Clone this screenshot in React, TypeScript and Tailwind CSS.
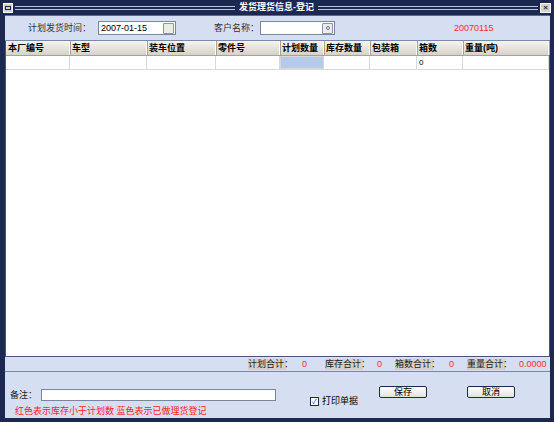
import React from 'react';

const columns = [
  { title: '本厂编号', w: 'w-[64px]' },
  { title: '车型', w: 'w-[77px]' },
  { title: '装车位置', w: 'w-[69px]' },
  { title: '零件号', w: 'w-[64px]' },
  { title: '计划数量', w: 'w-[44px]' },
  { title: '库存数量', w: 'w-[46px]' },
  { title: '包装箱', w: 'w-[47px]' },
  { title: '箱数', w: 'w-[46px]' },
  { title: '重量(吨)', w: 'flex-1' },
];

// label box, space, value box — widths match the reference positions
const totals = [
  { label: '计划合计：', value: '0', pad: 'w-[16px]', vw: 'w-[23px]' },
  { label: '库存合计：', value: '0', pad: 'w-[14px]', vw: 'w-[18px]' },
  { label: '箱数合计：', value: '0', pad: 'w-[16px]', vw: 'w-[18px]' },
  { label: '重量合计：', value: '0.0000', pad: 'w-[14px]', vw: 'w-[30px]' },
];

const SmallBtn = ({ dot }: { dot?: boolean }) => (
  <div className="w-[11px] h-[11px] bg-[#ecebe6] border border-[#8a94a8] rounded-[1px] flex items-center justify-center">
    {dot && <div className="w-[4px] h-[4px] border border-[#6b7896] rounded-full" />}
  </div>
);

const Button = ({ label }: { label: string }) => (
  <div className="w-[48px] h-[12px] bg-gradient-to-b from-[#ffffff] to-[#e2e2dc] border border-[#1c2a50] rounded-[2px] flex items-center justify-center text-[9px] leading-none text-black">
    {label}
  </div>
);

export default function App() {
  return (
    <div
      className="w-[554px] h-[422px] bg-[#1d2850] flex flex-col overflow-hidden text-black"
      style={{ fontFamily: '"Liberation Sans", "Noto Sans CJK SC", sans-serif' }}
    >
      {/* title bar */}
      <div className="h-[15px] flex items-center px-[3px] gap-[2px] shrink-0">
        <div className="w-[10px] h-[10px] bg-[#d4d0c8] border border-[#ffffff] flex items-center justify-center">
          <div className="w-[6px] h-[4px] border border-[#1d2850]" />
        </div>
        <div className="flex-1 flex flex-col gap-[2px]">
          <div className="h-px bg-[#b8c4e0]" />
          <div className="h-px bg-[#b8c4e0]" />
        </div>
        <div className="px-[2px] text-[9px] font-bold text-white leading-none">发货理货信息-登记</div>
        <div className="flex-1 flex flex-col gap-[2px]">
          <div className="h-px bg-[#b8c4e0]" />
          <div className="h-px bg-[#b8c4e0]" />
        </div>
        <div className="w-[11px] h-[10px] bg-[#d4d0c8] border border-[#ffffff] flex items-center justify-center text-[8px] leading-none font-bold text-[#1d2850]">
          ×
        </div>
      </div>

      <div className="flex-1 mx-[5px] mr-[4px] bg-[#d6def1] flex flex-col border-t border-[#5a6a94]">
        {/* form */}
        <div className="h-[25px] flex items-center text-[9px] leading-none shrink-0 border-b border-[#7888aa]">
          <span className="ml-[23px] text-[#333]">计划发货时间：</span>
          <div className="ml-[7px] w-[78px] h-[14px] bg-white border border-[#7a869e] flex items-center justify-between pl-[2px] pr-[1px]">
            <span>2007-01-15</span>
            <SmallBtn />
          </div>
          <span className="ml-[38px] text-[#333]">客户名称：</span>
          <div className="ml-[1px] w-[75px] h-[14px] bg-white border border-[#7a869e] flex items-center justify-end pr-[1px]">
            <SmallBtn dot />
          </div>
          <span className="ml-[119px] text-[#ff2a2a]">20070115</span>
        </div>

        {/* table */}
        <div className="flex-1 bg-white flex flex-col border border-[#4a5678] border-t-0">
          <div className="h-[15px] flex bg-gradient-to-b from-[#f6f5f0] to-[#d6d2c8] border-b border-[#a6a296] shrink-0">
            {columns.map((c) => (
              <div
                key={c.title}
                className={`${c.w} border-r border-[#ffffff] shadow-[1px_0_0_#a6a296] flex items-center pl-[2px] text-[9px] font-bold leading-none`}
              >
                {c.title}
              </div>
            ))}
          </div>
          <div className="h-[14px] flex border-b border-[#d8d8d8] shrink-0">
            {columns.map((c, i) => (
              <div
                key={c.title}
                className={`${c.w} border-r border-[#d8d8d8] flex items-center pl-[2px] text-[8px] leading-none ${i === 4 ? 'bg-[#b6cbea] border border-[#8fa8cc]' : ''}`}
              >
                {i === 7 ? '0' : ''}
              </div>
            ))}
          </div>
          <div className="flex-1" />
        </div>

        {/* totals */}
        <div className="h-[15px] flex items-center pl-[243px] text-[9px] leading-none shrink-0 border-b border-[#7888aa]">
          {totals.map((t) => (
            <div key={t.label} className="flex items-center">
              <span className="w-[38px] bg-[#d4d0c8] py-[1px] text-[#222] whitespace-nowrap">{t.label}</span>
              <div className={t.pad} />
              <span className={`${t.vw} text-[#ff2a2a]`}>{t.value}</span>
            </div>
          ))}
        </div>

        {/* bottom */}
        <div className="h-[46px] shrink-0 flex items-start text-[9px] leading-none">
          <div className="w-[275px] pt-[17px] flex flex-col">
            <div className="flex items-center">
              <span className="ml-[5px] text-[#222]">备注：</span>
              <div className="ml-[4px] w-[235px] h-[12px] bg-white border border-[#7a869e]" />
            </div>
            <div className="ml-[10px] mt-[6px] text-[#ff1a1a] whitespace-nowrap">红色表示库存小于计划数 蓝色表示已做理货登记</div>
          </div>
          <div className="ml-[30px] mt-[25px] flex items-center gap-[3px]">
            <div className="w-[9px] h-[9px] bg-white border border-[#1d2850] flex items-center justify-center text-[7px] text-[#2050c0] leading-none">✓</div>
            <span>打印单据</span>
          </div>
          <div className="ml-[21px] mt-[14px]">
            <Button label="保存" />
          </div>
          <div className="ml-[40px] mt-[14px]">
            <Button label="取消" />
          </div>
        </div>
      </div>
      <div className="h-[4px] shrink-0" />
    </div>
  );
}
